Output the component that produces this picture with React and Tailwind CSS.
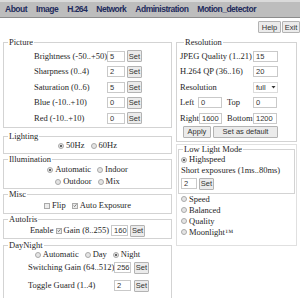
import React from "react";

function Radio({ on }) {
  return (
    <span className="inline-flex w-[6px] h-[6px] rounded-full border border-[#a9a9a9] bg-[#e4e4e4] items-center justify-center shrink-0">
      {on && <span className="w-[2.5px] h-[2.5px] rounded-full bg-[#3a3a3a]" />}
    </span>
  );
}

function Check({ on }) {
  return (
    <span className="inline-flex w-[6px] h-[6px] border border-[#a9a9a9] bg-[#ececec] items-center justify-center shrink-0">
      {on && (
        <svg width="5" height="5" viewBox="0 0 5 5">
          <path d="M0.8 2.6 L2 3.8 L4.3 1" stroke="#555" strokeWidth="0.9" fill="none" />
        </svg>
      )}
    </span>
  );
}

function Inp({ v, w = "w-[18px]" }) {
  return (
    <span
      className={`${w} h-[11px] inline-flex items-center border border-[#c9c9c9] bg-white pl-[2px] text-[7.5px] font-['Liberation_Sans',sans-serif] text-[#333] shrink-0`}
    >
      {v}
    </span>
  );
}

function Btn({ children, w = "w-[15px]" }) {
  return (
    <span
      className={`${w} h-[12px] inline-flex items-center justify-center border border-[#b3b3b3] rounded-[1px] bg-[#ebebeb] text-[7.5px] font-['Liberation_Sans',sans-serif] text-[#333] shrink-0`}
    >
      {children}
    </span>
  );
}

function FS({ legend, className = "", children }) {
  return (
    <fieldset className={`border border-[#d3d3d3] ${className}`}>
      <legend className="ml-[4px] px-[1px] leading-[9px] h-[9px]">{legend}</legend>
      {children}
    </fieldset>
  );
}

export default function App() {
  const nav = [
    ["About", "ml-[5px]"],
    ["Image", "ml-[9px]"],
    ["H.264", "ml-[9px]"],
    ["Network", "ml-[9px]"],
    ["Administration", "ml-[9px]"],
    ["Motion_detector", "ml-[9px]"],
  ];
  const pic = [
    ["Brightness (-50..+50)", "5"],
    ["Sharpness (0..4)", "2"],
    ["Saturation (0..6)", "5"],
    ["Blue (-10..+10)", "0"],
    ["Red (-10..+10)", "0"],
  ];
  return (
    <div className="w-[300px] min-h-[298px] overflow-hidden whitespace-nowrap bg-white text-[#262626] font-['Liberation_Serif',serif] text-[8.5px] leading-[9px]">
      {/* nav */}
      <div className="h-[18px] border-t-2 border-[#dadada] bg-[#bdbdbd] border-b border-b-[#8c8c8c] flex items-center font-['Liberation_Sans',sans-serif] font-bold text-[8.5px] tracking-[-0.5px] text-[#1d2b5c]">
        {nav.map(([n, c]) => (
          <span key={n} className={c}>
            {n}
          </span>
        ))}
      </div>
      {/* help/exit */}
      <div className="flex justify-end gap-[1px] mt-[3px]">
        <Btn w="w-[23px]">Help</Btn>
        <Btn w="w-[18px]">Exit</Btn>
      </div>
      <div className="flex gap-[4px] pl-[3px] mt-[5px]">
        {/* left column */}
        <div className="w-[169px] flex flex-col">
          <FS legend="Picture" className="pt-[1.25px] pb-[1px]">
            <div className="grid grid-cols-[72px_18px_15px] gap-x-[1px] w-[107px] ml-[30px]">
              {pic.map(([l, v]) => (
                <React.Fragment key={l}>
                  <span className="h-[15.5px] flex items-center">{l}</span>
                  <span className="h-[15.5px] flex items-center">
                    <Inp v={v} />
                  </span>
                  <span className="h-[15.5px] flex items-center ml-[1px]">
                    <Btn>Set</Btn>
                  </span>
                </React.Fragment>
              ))}
            </div>
          </FS>
          <FS legend="Lighting" className="mt-[4px] pb-[2px]">
            <div className="h-[10px] flex items-center justify-center gap-[2px]">
              <Radio on />
              <span>50Hz</span>
              <span className="w-[2px]" />
              <Radio />
              <span>60Hz</span>
            </div>
          </FS>
          <FS legend="Illumination" className="mt-[1px]">
            <div className="h-[12px] flex items-center justify-center gap-[2px]">
              <Radio on />
              <span>Automatic</span>
              <span className="w-[2px]" />
              <Radio />
              <span>Indoor</span>
            </div>
            <div className="h-[12px] flex items-center justify-center gap-[2px]">
              <Radio />
              <span>Outdoor</span>
              <span className="w-[2px]" />
              <Radio />
              <span>Mix</span>
            </div>
          </FS>
          <FS legend="Misc" className="mt-[1px] pt-[1px] pb-[1px]">
            <div className="h-[12px] flex items-center justify-center gap-[2px]">
              <Check />
              <span>Flip</span>
              <span className="w-[2px]" />
              <Check on />
              <span>Auto Exposure</span>
            </div>
          </FS>
          <FS legend="AutoIris" className="mt-[1px] pt-[1px] pb-[1px]">
            <div className="h-[12px] flex items-center justify-center gap-[2px]">
              <span>Enable</span>
              <Check on />
              <span>Gain (8..255)</span>
              <Inp v="160" w="w-[17px]" />
              <Btn>Set</Btn>
            </div>
          </FS>
          <FS legend="DayNight" className="mt-[2px] pb-[6px]">
            <div className="h-[10px] flex items-center justify-center gap-[2px]">
              <Radio />
              <span>Automatic</span>
              <span className="w-[2px]" />
              <Radio />
              <span>Day</span>
              <span className="w-[2px]" />
              <Radio on />
              <span>Night</span>
            </div>
            <div className="ml-[24px] mt-[2px] h-[12px] flex items-center gap-[1px]">
              <span className="w-[85px]">Switching Gain (64..512)</span>
              <Inp v="256" w="w-[17px]" />
              <span className="w-[1px]" />
              <Btn>Set</Btn>
            </div>
            <div className="ml-[24px] mt-[6px] h-[12px] flex items-center gap-[1px]">
              <span className="w-[85px]">Toggle Guard (1..4)</span>
              <Inp v="2" w="w-[17px]" />
              <span className="w-[1px]" />
              <Btn>Set</Btn>
            </div>
          </FS>
        </div>
        {/* right column */}
        <div className="w-[121px] flex flex-col">
          <FS legend="Resolution" className="pt-[1.25px] pb-[3px] pl-[3px]">
            <div className="h-[15.5px] flex items-center">
              <span className="w-[73px]">JPEG Quality (1..21)</span>
              <Inp v="15" w="w-[25px]" />
            </div>
            <div className="h-[15.5px] flex items-center">
              <span className="w-[73px]">H.264 QP (36..16)</span>
              <Inp v="20" w="w-[25px]" />
            </div>
            <div className="h-[15.5px] flex items-center">
              <span className="w-[73px]">Resolution</span>
              <span className="w-[25px] h-[11px] inline-flex items-center justify-between border border-[#dcdcdc] bg-white pl-[2px] pr-[1px] text-[7.5px] font-['Liberation_Sans',sans-serif] text-[#333]">
                <span>full</span>
                <svg width="5" height="4" viewBox="0 0 5 4">
                  <path d="M0.5 1 L4.5 1 L2.5 3.5 Z" fill="#333" />
                </svg>
              </span>
            </div>
            <div className="h-[15.5px] flex items-center">
              <span className="w-[18px]">Left</span>
              <Inp v="0" w="w-[24px]" />
              <span className="w-[31px] pl-[5px]">Top</span>
              <Inp v="0" w="w-[24px]" />
            </div>
            <div className="h-[15.5px] flex items-center">
              <span className="w-[19px]">Right</span>
              <Inp v="1600" w="w-[23px]" />
              <span className="w-[31px] pl-[5px]">Bottom</span>
              <Inp v="1200" w="w-[24px]" />
            </div>
            <div className="h-[12px] flex items-center gap-[2px] pl-[3px]">
              <Btn w="w-[28px]">Apply</Btn>
              <Btn w="w-[65px]">Set as default</Btn>
            </div>
          </FS>
          <div className="mt-[2px] border border-[#e0e0e0] pb-[7px]">
            <fieldset className="border border-[#d3d3d3] mx-[1px] mt-[0.5px] pl-[2px] pb-[3px]">
              <legend className="ml-[2px] px-[1px] leading-[9px] h-[9px]">Low Light Mode</legend>
              <div className="h-[11px] flex items-center gap-[2px]">
                <Radio on />
                <span>Highspeed</span>
              </div>
              <div className="h-[11px] flex items-center">Short exposures (1ms..80ms)</div>
              <div className="h-[12px] mt-[1.5px] flex items-center gap-[2px]">
                <Inp v="2" w="w-[16px]" />
                <Btn>Set</Btn>
              </div>
            </fieldset>
            {["Speed", "Balanced", "Quality", "Moonlight™"].map((t) => (
              <div key={t} className="h-[11px] flex items-center gap-[2px] pl-[4px]">
                <Radio />
                <span>{t}</span>
              </div>
            ))}
          </div>
        </div>
      </div>
    </div>
  );
}
